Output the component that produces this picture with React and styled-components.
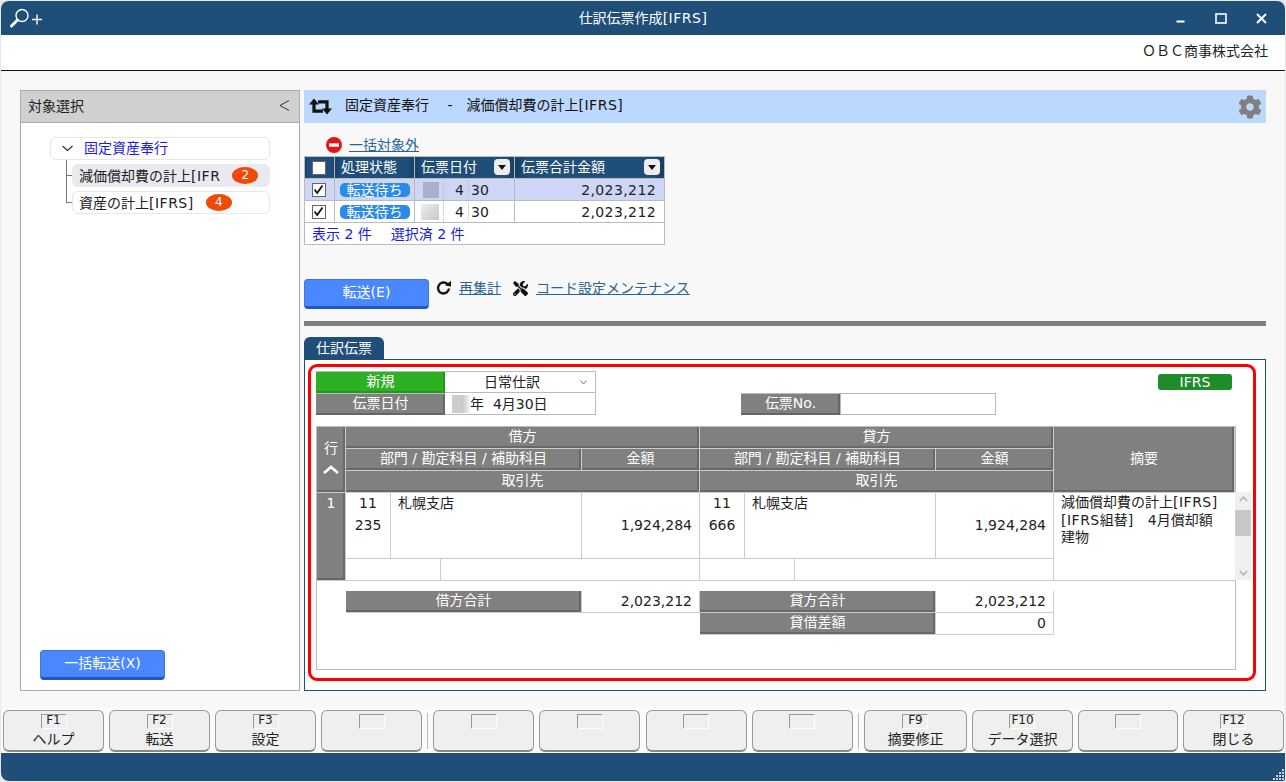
import React from "react";
import styled, { createGlobalStyle } from "styled-components";
import { FaCog, FaTools } from "react-icons/fa";

const navy = "#1f4e79";

const GlobalStyle = createGlobalStyle`
  html, body {
    margin: 0;
    padding: 0;
    background: #e8e8e8;
  }
  body {
    font-family: "DejaVu Sans", "Noto Sans CJK JP", sans-serif;
    font-size: 14px;
    line-height: 14px;
    color: #222;
  }
`;

const Window = styled.div`
  box-sizing: border-box;
  width: 1284px;
  height: 780px;
  margin: 1px;
  background: #f8f8f8;
  border-radius: 8px 8px 2px 8px;
  overflow: hidden;
  display: flex;
  flex-direction: column;
`;

const TitleBar = styled.div`
  height: 34px;
  flex: none;
  background: ${navy};
  color: #fff;
  display: grid;
  grid-template-columns: 1fr auto 1fr;
  align-items: center;
`;

const ZoomTool = styled.div`
  padding-left: 7px;
  display: flex;
`;

const WindowControls = styled.div`
  justify-self: end;
  display: flex;
  align-items: center;
  gap: 29px;
  padding-right: 18px;
`;

const CompanyBar = styled.div`
  height: 36px;
  flex: none;
  box-sizing: border-box;
  background: #fff;
  border-bottom: 1px solid #111;
  padding: 0 17px 3px 0;
  display: flex;
  align-items: center;
  justify-content: flex-end;
`;

const Main = styled.div`
  height: 637px;
  flex: none;
  box-sizing: border-box;
  display: flex;
  gap: 4px;
  padding: 19px 19px 17px 19px;
`;

const SidePanel = styled.aside`
  box-sizing: border-box;
  width: 280px;
  background: #fff;
  border: 1px solid #aaa;
  display: flex;
  flex-direction: column;
`;

const SideHead = styled.div`
  height: 32px;
  flex: none;
  box-sizing: border-box;
  background: #d0d0d0;
  border-bottom: 1px solid #aaa;
  padding: 0 9px 2px 7px;
  display: flex;
  align-items: center;
  justify-content: space-between;
`;

const Tree = styled.div`
  padding: 14px 29px 0 29px;
  display: flex;
  flex-direction: column;
`;

const TreeRoot = styled.div`
  box-sizing: border-box;
  height: 23px;
  background: #fff;
  border: 1px solid #e6e6e6;
  border-radius: 6px;
  padding: 0 0 1px 11px;
  display: flex;
  align-items: center;
  gap: 11px;
  color: #1c1ce0;
`;

const Branch = styled.div`
  position: relative;
  padding: 4px 0 0 22px;
  &::before {
    content: "";
    position: absolute;
    left: 16px;
    top: 0;
    bottom: ${(p) => (p.$last ? "11px" : "0")};
    border-left: 1px solid #777;
  }
  &::after {
    content: "";
    position: absolute;
    left: 16px;
    width: 6px;
    bottom: 11px;
    border-top: 1px solid #777;
  }
`;

const TreeItem = styled.div`
  box-sizing: border-box;
  height: 23px;
  border-radius: 6px;
  background: ${(p) => (p.$active ? "#e9e9ef" : "#fff")};
  border: 1px solid ${(p) => (p.$active ? "#e9e9ef" : "#e6e6e6")};
  padding-left: 6px;
  display: flex;
  align-items: center;
  white-space: nowrap;
`;

const CountBadge = styled.span`
  width: 26px;
  height: 17px;
  margin-left: ${(p) => p.$gap}px;
  border-radius: 50%;
  background: #f04a08;
  color: #fff;
  font-size: 12px;
  line-height: 17px;
  text-align: center;
`;

const Latin = styled.span`
  letter-spacing: 0.5px;
`;

const BulkArea = styled.div`
  margin-top: auto;
  padding: 0 0 10px 19px;
`;

const ActionButton = styled.button`
  box-sizing: border-box;
  width: 125px;
  height: 30px;
  padding: 0 0 2px;
  border: 1px solid #3f74d8;
  border-bottom: 3px solid #2456c8;
  border-radius: 4px;
  background: #4a88ff;
  color: #fff;
  font: inherit;
`;

const Content = styled.section`
  width: 962px;
  display: flex;
  flex-direction: column;
`;

const JobTitle = styled.div`
  height: 33px;
  flex: none;
  background: #bcd8fd;
  padding: 0 4px 0 5px;
  display: flex;
  align-items: center;
  white-space: pre;
  color: #111;
`;

const JobName = styled.span`
  margin: 0 0 3px 13px;
  flex: 1;
`;

const ExcludeRow = styled.div`
  height: 16px;
  margin-top: 14px;
  padding-left: 22px;
  display: flex;
  align-items: center;
  gap: 7px;
`;

const TextLink = styled.a`
  color: #2a6496;
  text-decoration: underline;
`;

const SlipTable = styled.div`
  box-sizing: border-box;
  width: 361px;
  margin-top: 3px;
  border: 1px solid #bbb;
  border-bottom: 0;
  border-right: 0;
  background: #fff;
  display: grid;
  grid-template-columns: 30px 80px 100px 150px;
  grid-auto-rows: 22px;
`;

const SlipHead = styled.div`
  box-sizing: border-box;
  border-right: 1px solid #bbb;
  border-bottom: 1px solid #bbb;
  background: linear-gradient(90deg, #163e63 0, ${navy} 8%, ${navy} 92%, #163e63 100%);
  color: #fff;
  padding: ${(p) => (p.$center ? "0 2px 0 0" : "0 4px 1px 6px")};
  display: flex;
  align-items: center;
  justify-content: ${(p) => (p.$center ? "center" : "space-between")};
`;

const SlipCell = styled.div`
  box-sizing: border-box;
  border-right: 1px solid #bbb;
  border-bottom: 1px solid #bbb;
  background: ${(p) => (p.$selected ? "#cdd7f5" : "#fff")};
  display: flex;
  align-items: center;
  justify-content: ${(p) => p.$justify || "center"};
  padding-right: ${(p) => p.$right || 0}px;
`;

const SlipFooter = styled.div`
  grid-column: 1 / -1;
  box-sizing: border-box;
  border-right: 1px solid #bbb;
  border-bottom: 1px solid #bbb;
  color: #1c1ce0;
  padding-left: 7px;
  display: flex;
  align-items: center;
  gap: 19px;
`;

const Check = styled.span`
  box-sizing: border-box;
  width: 14px;
  height: 14px;
  background: #fff;
  border: 1px solid #666;
  display: flex;
  align-items: center;
  justify-content: center;
`;

const FilterButton = styled.span`
  width: 16px;
  height: 16px;
  border-radius: 4px;
  background: #eee;
  display: flex;
  align-items: center;
  justify-content: center;
  &::after {
    content: "";
    border: 4px solid transparent;
    border-top: 5px solid #111;
    border-bottom: 0;
  }
`;

const StatusPill = styled.span`
  width: 70px;
  height: 14px;
  border-radius: 5px;
  background: #2a8ae8;
  color: #fff;
  font-size: 14px;
  line-height: 14px;
  text-align: center;
`;

const Masked = styled.span`
  display: block;
  flex: none;
  width: ${(p) => p.$w}px;
  height: ${(p) => p.$h}px;
  background: ${(p) => p.$bg};
`;

const DateParts = styled.div`
  width: 100%;
  display: grid;
  grid-template-columns: 28px 25px 1fr;
  height: 100%;
`;

const DateThumb = styled.div`
  display: flex;
  align-items: center;
  justify-content: flex-end;
  padding-right: 4px;
`;

const DateNum = styled.div`
  display: flex;
  align-items: center;
  justify-content: ${(p) => (p.$right ? "flex-end" : "flex-start")};
  padding: 0 ${(p) => (p.$right ? "4px" : "0")} 0 ${(p) => (p.$right ? "0" : "2px")};
  border-left: 1px dotted #bbb;
  &:last-child {
    margin: 2px 0;
  }
`;

const Amount = styled.span`
  letter-spacing: 0.4px;
`;

const TransferRow = styled.div`
  margin-top: 34px;
  display: flex;
  align-items: flex-start;
`;

const ToolLink = styled.div`
  display: flex;
  align-items: center;
  gap: ${(p) => p.$inner}px;
  margin-left: ${(p) => p.$gap}px;
  height: 18px;
`;

const Divider = styled.div`
  height: 5px;
  margin-top: 12px;
  flex: none;
  background: #808080;
`;

const Tab = styled.div`
  width: 80px;
  height: 22px;
  flex: none;
  margin-top: 11px;
  box-sizing: border-box;
  padding-left: 12px;
  background: ${navy};
  color: #fff;
  border-radius: 6px 6px 0 0;
  display: flex;
  align-items: center;
`;

const TabPanel = styled.div`
  box-sizing: border-box;
  flex: 1;
  border: 1px solid ${navy};
  background: #fff;
  padding: 4px 9px 9px 3px;
  display: flex;
`;

const Highlight = styled.div`
  box-sizing: border-box;
  flex: 1;
  border: 3px solid #f00;
  border-radius: 9px;
  padding: 4px 17px 0 5px;
`;

const FormRow = styled.div`
  display: flex;
  align-items: flex-start;
  height: 22px;
`;

const GrayLabel = styled.div`
  box-sizing: border-box;
  width: ${(p) => p.$w}px;
  height: 22px;
  margin-left: ${(p) => p.$gap || 0}px;
  background: ${(p) => (p.$green ? "#2db024" : "#808080")};
  border-top: 1px solid #bbb;
  box-shadow: inset -2px -2px 0 ${(p) => (p.$green ? "#26961e" : "#666")};
  color: #fff;
  text-align: center;
  line-height: 18px;
`;

const ValueBox = styled.div`
  box-sizing: border-box;
  width: ${(p) => p.$w}px;
  height: 22px;
  background: #fff;
  border: 1px solid #bbb;
  border-left-width: ${(p) => (p.$first ? 0 : 1)}px;
  border-top-width: ${(p) => (p.$top ? 1 : 0)}px;
  padding: 0 8px 0 7px;
  display: flex;
  align-items: center;
  white-space: pre;
`;

const SelectText = styled.span`
  flex: 1;
  padding-left: 32px;
`;

const IfrsBadge = styled.div`
  width: 74px;
  height: 16px;
  margin: 3px 4px 0 auto;
  border-radius: 3px;
  background: #1e8c28;
  color: #fff;
  font-size: 14px;
  line-height: 16px;
  text-align: center;
`;

const Journal = styled.div`
  position: relative;
  box-sizing: border-box;
  width: 920px;
  height: 244px;
  margin-top: 11px;
  border: 1px solid #bbb;
  display: grid;
  grid-template-columns: 29px 45px 50px 141px 118px 45px 50px 141px 118px 181px;
  grid-template-rows: 22px 22px 22px 22px 22px 22px 22px 10px 22px 22px 1fr;
`;

const HeadCell = styled.div`
  grid-column: ${(p) => p.$col};
  grid-row: ${(p) => p.$row};
  box-sizing: border-box;
  background: #808080;
  box-shadow: inset -2px -2px 0 #686868;
  border-right: 1px solid #ccc;
  border-bottom: 1px solid #ccc;
  color: #fff;
  display: flex;
  flex-direction: column;
  align-items: center;
  gap: ${(p) => p.$gap || 0}px;
  justify-content: ${(p) => (p.$top ? "flex-start" : "center")};
  padding: ${(p) => (p.$top ? "3px" : "0")} 0 4px;
  white-space: pre;
`;

const DataCell = styled.div`
  grid-column: ${(p) => p.$col};
  grid-row: ${(p) => p.$row};
  box-sizing: border-box;
  border-right: 1px solid #ccc;
  border-bottom: 1px solid #ccc;
  display: flex;
  flex-direction: column;
  gap: 2px;
  align-items: ${(p) => p.$align || "center"};
  padding: ${(p) => p.$pad || "0"};
  line-height: 20px;
`;

const SummaryText = styled.div`
  grid-column: 10 / 11;
  grid-row: 4 / 8;
  box-sizing: border-box;
  border-bottom: 1px solid #ccc;
  padding: 1px 0 0 7px;
  line-height: 17.5px;
  white-space: pre;
`;

const ScrollBar = styled.div`
  position: absolute;
  top: 65px;
  left: 918px;
  width: 16px;
  height: 88px;
  background: #f0f0f0;
  color: #999;
  display: flex;
  flex-direction: column;
  align-items: center;
  justify-content: space-between;
  padding: 4px 0;
  box-sizing: border-box;
`;

const ScrollThumb = styled.div`
  position: absolute;
  top: 18px;
  left: 0;
  width: 16px;
  height: 26px;
  background: #c8c8c8;
`;

const KeyBar = styled.div`
  height: 45px;
  flex: none;
  box-sizing: border-box;
  background: #fbfbfb;
  padding: 2px 1px 1px 2px;
  display: flex;
  justify-content: space-between;
`;

const KeyGroup = styled.div`
  display: flex;
  gap: ${(p) => p.$gap}px;
`;

const KeySep = styled.div`
  width: 1px;
  margin: 3px 0;
  background: #bbb;
`;

const FnKey = styled.div`
  box-sizing: border-box;
  width: ${(p) => p.$w || 101}px;
  height: 42px;
  background: #efefef;
  border: 1px solid #999;
  border-bottom: 2px solid #888;
  border-radius: 6px;
  display: flex;
  flex-direction: column;
  align-items: center;
`;

const FnLabel = styled.div`
  box-sizing: border-box;
  width: 26px;
  height: 15px;
  margin-top: 3px;
  border-top: 1px solid #999;
  border-left: 1px solid #999;
  border-right: 1px solid #fff;
  border-bottom: 1px solid #fff;
  font-size: 12px;
  line-height: 10px;
  text-align: center;
`;

const FnCaption = styled.div`
  line-height: 19px;
  margin-top: 1px;
  white-space: nowrap;
`;

const StatusBar = styled.div`
  flex: 1;
  background: ${navy};
  display: flex;
  justify-content: flex-end;
  align-items: flex-end;
`;

const fnKeys = [
  {
    gap: 5,
    keys: [
      ["F1", "ヘルプ"],
      ["F2", "転送"],
      ["F3", "設定"],
      ["", ""],
    ],
  },
  {
    gap: 5.34,
    keys: [
      ["", ""],
      ["", ""],
      ["", ""],
      ["", ""],
    ],
  },
  {
    gap: 5,
    keys: [
      ["F9", "摘要修正", 103],
      ["F10", "データ選択"],
      ["", "", 100],
      ["F12", "閉じる"],
    ],
  },
];

const slipRows = [
  { selected: true, thumb: { w: 16, h: 16, bg: "#a8b0cc" } },
  { selected: false, thumb: { w: 18, h: 16, bg: "linear-gradient(135deg, #eee, #c8c8c8)" } },
];

const CheckMark = () => (
  <svg width="11" height="11" viewBox="0 0 11 11">
    <path d="M1.5 5.5 L4.2 9 L9.5 1.5" fill="none" stroke="#111" strokeWidth="1.8" />
  </svg>
);

const RepeatIcon = () => (
  <svg width="23" height="17" viewBox="0 0 23 17">
    <path d="M5 3.5 V13.2 H14" fill="none" stroke="#111" strokeWidth="3.2" />
    <path d="M0 6.5 L5 0.5 L10 6.5 Z" fill="#111" />
    <path d="M18 13.5 V3.8 H9" fill="none" stroke="#111" strokeWidth="3.2" />
    <path d="M13 10.5 L18 16.5 L23 10.5 Z" fill="#111" />
  </svg>
);

const RefreshIcon = () => (
  <svg width="16" height="16" viewBox="0 0 16 16">
    <path d="M11.5 4.2 A5.5 5.5 0 1 0 13 8.5" fill="none" stroke="#111" strokeWidth="2.4" />
    <path d="M9 5.5 L15 0.8 L15 6.5 Z" fill="#111" />
  </svg>
);

const JournalSide = ({ from, code, name }) => {
  const c = (a, b) => `${from + a} / ${from + b}`;
  return (
    <>
      <HeadCell $col={c(0, 4)} $row="1 / 2">{from === 2 ? "借方" : "貸方"}</HeadCell>
      <HeadCell $col={c(0, 3)} $row="2 / 3">部門 / 勘定科目 / 補助科目</HeadCell>
      <HeadCell $col={c(3, 4)} $row="2 / 3">金額</HeadCell>
      <HeadCell $col={c(0, 4)} $row="3 / 4">取引先</HeadCell>
      <DataCell $col={c(0, 1)} $row="4 / 7">
        <span>11</span>
        <span>{code}</span>
      </DataCell>
      <DataCell $col={c(1, 3)} $row="4 / 7" $align="flex-start" $pad="0 0 0 7px">{name}</DataCell>
      <DataCell $col={c(3, 4)} $row="4 / 7" $align="flex-end" $pad="22px 7px 0 0">1,924,284</DataCell>
      <DataCell $col={c(0, 2)} $row="7 / 8" />
      <DataCell $col={c(2, 4)} $row="7 / 8" />
    </>
  );
};

export default function App() {
  return (
    <>
      <GlobalStyle />
      <Window>
        <TitleBar>
          <ZoomTool>
            <svg width="36" height="22" viewBox="0 0 36 22">
              <circle cx="14" cy="8.5" r="6" fill="none" stroke="#fff" strokeWidth="1.4" />
              <path d="M9.5 13 L3.5 19" stroke="#fff" strokeWidth="3" strokeLinecap="round" />
              <path d="M24 12.5 H34 M29 7.5 V17.5" stroke="#fff" strokeWidth="1.4" />
            </svg>
          </ZoomTool>
          <span>仕訳伝票作成<Latin>[IFRS]</Latin></span>
          <WindowControls>
            <svg width="11" height="10" viewBox="0 0 11 10">
              <path d="M1.5 8.5 H9.5" stroke="#fff" strokeWidth="2" />
            </svg>
            <svg width="12" height="11" viewBox="0 0 12 11">
              <rect x="1" y="1" width="10" height="9" fill="none" stroke="#fff" strokeWidth="1.6" />
            </svg>
            <svg width="11" height="11" viewBox="0 0 11 11">
              <path d="M1 1 L10 10 M10 1 L1 10" stroke="#fff" strokeWidth="2" />
            </svg>
          </WindowControls>
        </TitleBar>
        <CompanyBar>ＯＢＣ商事株式会社</CompanyBar>

        <Main>
          <SidePanel>
            <SideHead>
              対象選択
              <svg width="11" height="11" viewBox="0 0 11 11">
                <path d="M10 0.5 L1 5.5 L10 10.5" fill="none" stroke="#333" strokeWidth="1" />
              </svg>
            </SideHead>
            <Tree>
              <TreeRoot>
                <svg width="11" height="7" viewBox="0 0 11 7">
                  <path d="M0.5 1 L5.5 5.5 L10.5 1" fill="none" stroke="#333" strokeWidth="1.2" />
                </svg>
                固定資産奉行
              </TreeRoot>
              <Branch>
                <TreeItem $active>
                  <span>減価償却費の計上<Latin>[IFR</Latin></span>
                  <CountBadge $gap={12}>2</CountBadge>
                </TreeItem>
              </Branch>
              <Branch $last>
                <TreeItem>
                  <span>資産の計上<Latin>[IFRS]</Latin></span>
                  <CountBadge $gap={12}>4</CountBadge>
                </TreeItem>
              </Branch>
            </Tree>
            <BulkArea>
              <ActionButton>一括転送(X)</ActionButton>
            </BulkArea>
          </SidePanel>

          <Content>
            <JobTitle>
              <RepeatIcon />
              <JobName>固定資産奉行{"　 -　"}減価償却費の計上<Latin>[IFRS]</Latin></JobName>
              <FaCog size={24} color="#808080" />
            </JobTitle>

            <ExcludeRow>
              <svg width="16" height="16" viewBox="0 0 16 16">
                <circle cx="8" cy="8" r="8" fill="#e8141c" />
                <rect x="3" y="6.3" width="10" height="3.4" fill="#fff" />
              </svg>
              <TextLink>一括対象外</TextLink>
            </ExcludeRow>

            <SlipTable>
              <SlipHead $center>
                <Check />
              </SlipHead>
              <SlipHead>処理状態</SlipHead>
              <SlipHead>
                伝票日付
                <FilterButton />
              </SlipHead>
              <SlipHead>
                伝票合計金額
                <FilterButton />
              </SlipHead>
              {slipRows.map((row, i) => (
                <React.Fragment key={i}>
                  <SlipCell $selected={row.selected} $right={2}>
                    <Check>
                      <CheckMark />
                    </Check>
                  </SlipCell>
                  <SlipCell $selected={row.selected}>
                    <StatusPill>転送待ち</StatusPill>
                  </SlipCell>
                  <SlipCell $selected={row.selected}>
                    <DateParts>
                      <DateThumb>
                        <Masked $w={row.thumb.w} $h={row.thumb.h} $bg={row.thumb.bg} />
                      </DateThumb>
                      <DateNum $right>4</DateNum>
                      <DateNum>30</DateNum>
                    </DateParts>
                  </SlipCell>
                  <SlipCell $selected={row.selected} $justify="flex-end" $right={8}>
                    <Amount>2,023,212</Amount>
                  </SlipCell>
                </React.Fragment>
              ))}
              <SlipFooter>
                <span>表示 2 件</span>
                <span>選択済 2 件</span>
              </SlipFooter>
            </SlipTable>

            <TransferRow>
              <ActionButton>転送(E)</ActionButton>
              <ToolLink $gap={7} $inner={7}>
                <RefreshIcon />
                <TextLink>再集計</TextLink>
              </ToolLink>
              <ToolLink $gap={12} $inner={8}>
                <FaTools size={15} color="#111" />
                <TextLink>コード設定メンテナンス</TextLink>
              </ToolLink>
            </TransferRow>

            <Divider />
            <Tab>仕訳伝票</Tab>
            <TabPanel>
              <Highlight>
                <FormRow>
                  <GrayLabel $w={129} $green>新規</GrayLabel>
                  <ValueBox $w={151} $first $top>
                    <SelectText>日常仕訳</SelectText>
                    <svg width="7" height="5" viewBox="0 0 7 5">
                      <path d="M0.5 0.5 L3.5 4 L6.5 0.5" fill="none" stroke="#777" strokeWidth="1" />
                    </svg>
                  </ValueBox>
                  <IfrsBadge>IFRS</IfrsBadge>
                </FormRow>
                <FormRow>
                  <GrayLabel $w={129}>伝票日付</GrayLabel>
                  <ValueBox $w={151} $first>
                    <Masked $w={18} $h={18} $bg="linear-gradient(90deg, #ccc 60%, #f4f4f4)" />
                    年  4月30日
                  </ValueBox>
                  <GrayLabel $w={99} $gap={145}>伝票No.</GrayLabel>
                  <ValueBox $w={156} $top />
                </FormRow>

                <Journal>
                  <HeadCell $col="1 / 2" $row="1 / 4" $gap={10}>
                    行
                    <svg width="16" height="9" viewBox="0 0 16 9">
                      <path d="M1 8 L8 2 L15 8" fill="none" stroke="#fff" strokeWidth="2.6" />
                    </svg>
                  </HeadCell>
                  <HeadCell $col="1 / 2" $row="4 / 8" $top>1</HeadCell>
                  <JournalSide from={2} code="235" name="札幌支店" />
                  <JournalSide from={6} code="666" name="札幌支店" />
                  <HeadCell $col="10 / 11" $row="1 / 4">摘要</HeadCell>
                  <SummaryText>
                    減価償却費の計上<Latin>[IFRS]</Latin>
                    {"\n"}
                    <Latin>[IFRS</Latin>組替<Latin>]</Latin>{"　"}4月償却額{"\n"}建物
                  </SummaryText>
                  <HeadCell $col="2 / 5" $row="9 / 10">借方合計</HeadCell>
                  <DataCell $col="5 / 6" $row="9 / 10" $align="flex-end" $pad="0 7px 0 0">2,023,212</DataCell>
                  <HeadCell $col="6 / 9" $row="9 / 10">貸方合計</HeadCell>
                  <DataCell $col="9 / 10" $row="9 / 10" $align="flex-end" $pad="0 7px 0 0">2,023,212</DataCell>
                  <HeadCell $col="6 / 9" $row="10 / 11">貸借差額</HeadCell>
                  <DataCell $col="9 / 10" $row="10 / 11" $align="flex-end" $pad="0 7px 0 0">0</DataCell>
                  <ScrollBar>
                    <svg width="9" height="6" viewBox="0 0 9 6">
                      <path d="M1 5 L4.5 1 L8 5" fill="none" stroke="#aaa" strokeWidth="1.2" />
                    </svg>
                    <ScrollThumb />
                    <svg width="9" height="6" viewBox="0 0 9 6">
                      <path d="M1 1 L4.5 5 L8 1" fill="none" stroke="#aaa" strokeWidth="1.2" />
                    </svg>
                  </ScrollBar>
                </Journal>
              </Highlight>
            </TabPanel>
          </Content>
        </Main>

        <KeyBar>
          {fnKeys.map((group, g) => (
            <React.Fragment key={g}>
              {g > 0 && <KeySep />}
              <KeyGroup $gap={group.gap}>
                {group.keys.map(([fn, caption, w], i) => (
                  <FnKey key={i} $w={w}>
                    <FnLabel>{fn}</FnLabel>
                    <FnCaption>{caption}</FnCaption>
                  </FnKey>
                ))}
              </KeyGroup>
            </React.Fragment>
          ))}
        </KeyBar>
        <StatusBar>
          <svg width="12" height="12" viewBox="0 0 12 12">
            <path d="M9 0h2v2h-2zM6 3h2v2h-2zM9 3h2v2h-2zM3 6h2v2h-2zM6 6h2v2h-2zM9 6h2v2h-2zM0 9h2v2h-2zM3 9h2v2h-2zM6 9h2v2h-2zM9 9h2v2h-2z" fill="#c8d4e0" />
          </svg>
        </StatusBar>
      </Window>
    </>
  );
}
